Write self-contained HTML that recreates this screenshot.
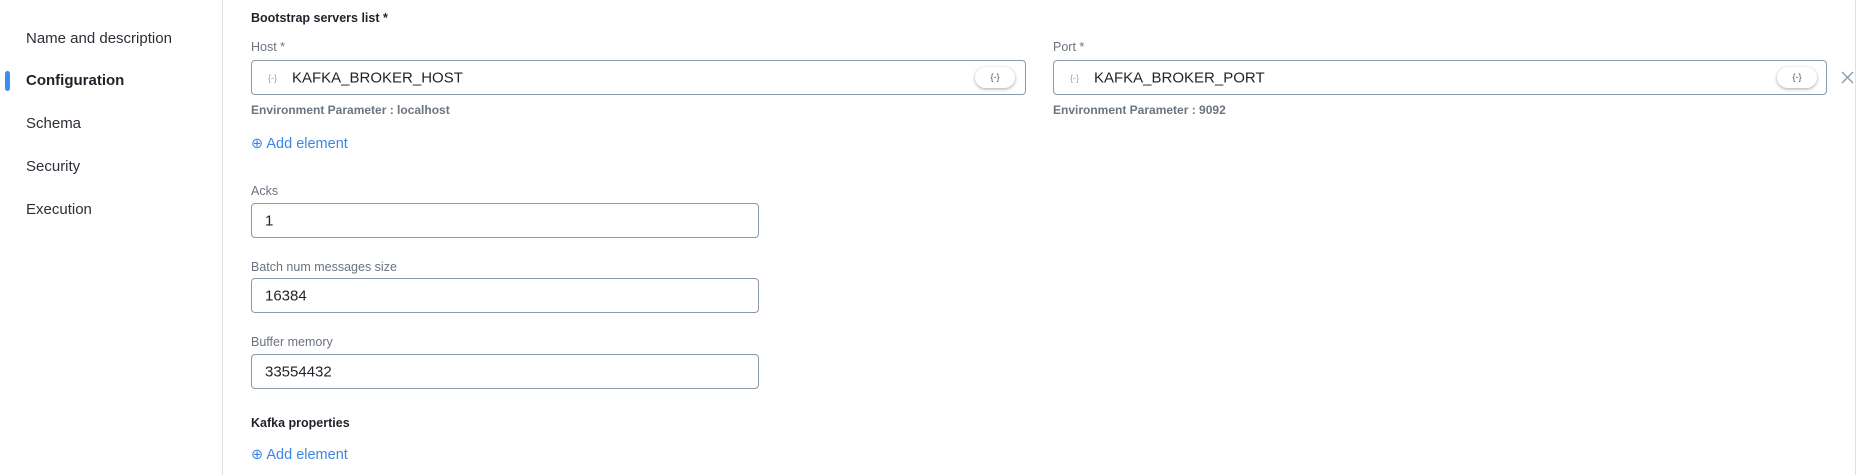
<!DOCTYPE html>
<html><head><meta charset="utf-8"><style>
body{margin:0;width:1858px;height:475px;background:#fff;font-family:"Liberation Sans",sans-serif;position:relative;overflow:hidden;color:#1f2329}
.a{position:absolute;white-space:nowrap}
.nav{left:26px;font-size:15px;color:#2b2f36}
.lbl{font-size:12.5px;color:#6b7480}
.b{font-size:12.5px;font-weight:bold;color:#1f2329}
.inp{position:absolute;border:1px solid #8c99a8;border-radius:4px;box-sizing:border-box;background:#fff;font-size:15px}
.inp span{position:absolute;top:50%;transform:translateY(-50%)}
.env{font-size:12px;font-weight:bold;color:#6b7480}
.add{font-size:14.5px;color:#3a86e6}
.pill{position:absolute;width:40px;height:21px;border-radius:11px;background:#fff;box-shadow:0 1px 3px rgba(0,0,0,.35);font-size:9px;color:#555;text-align:center;line-height:21px;top:6px}
.ic{font-size:9px;color:#9aa3ad}
</style></head><body>
<div class="a" style="left:222px;top:0;width:1px;height:475px;background:#dde1e6"></div>
<div class="a" style="left:1855px;top:0;width:1px;height:475px;background:#dde1e6"></div>
<div class="a nav" style="top:30px">Name and description</div>
<div class="a" style="left:5px;top:71px;width:5px;height:20px;border-radius:3px;background:#3b8ff0"></div>
<div class="a nav" style="top:72px;font-weight:bold;color:#1f2329">Configuration</div>
<div class="a nav" style="top:115px">Schema</div>
<div class="a nav" style="top:158px">Security</div>
<div class="a nav" style="top:201px">Execution</div>

<div class="a b" style="left:251px;top:11px">Bootstrap servers list *</div>
<div class="a lbl" style="left:251px;top:40px">Host *</div>
<div class="a lbl" style="left:1053px;top:40px">Port *</div>
<div class="inp" style="left:251px;top:60px;width:775px;height:35px"><span class="ic" style="left:16px">{-}</span><span style="left:40px">KAFKA_BROKER_HOST</span><div class="pill" style="left:723px">{-}</div></div>
<div class="inp" style="left:1053px;top:60px;width:774px;height:35px"><span class="ic" style="left:16px">{-}</span><span style="left:40px">KAFKA_BROKER_PORT</span><div class="pill" style="left:723px">{-}</div></div>
<svg class="a" style="left:1841px;top:71px" width="13" height="13" viewBox="0 0 13 13"><path d="M1 1L12 12M12 1L1 12" stroke="#8c99a8" stroke-width="1.4"/></svg>
<div class="a env" style="left:251px;top:103px">Environment Parameter : localhost</div>
<div class="a env" style="left:1053px;top:103px">Environment Parameter : 9092</div>
<div class="a add" style="left:251px;top:136px">⊕ Add element</div>

<div class="a lbl" style="left:251px;top:184px">Acks</div>
<div class="inp" style="left:251px;top:203px;width:508px;height:35px"><span style="left:13px">1</span></div>
<div class="a lbl" style="left:251px;top:260px">Batch num messages size</div>
<div class="inp" style="left:251px;top:278px;width:508px;height:35px"><span style="left:13px">16384</span></div>
<div class="a lbl" style="left:251px;top:335px">Buffer memory</div>
<div class="inp" style="left:251px;top:354px;width:508px;height:35px"><span style="left:13px">33554432</span></div>
<div class="a b" style="left:251px;top:416px">Kafka properties</div>
<div class="a add" style="left:251px;top:447px">⊕ Add element</div>
</body></html>
